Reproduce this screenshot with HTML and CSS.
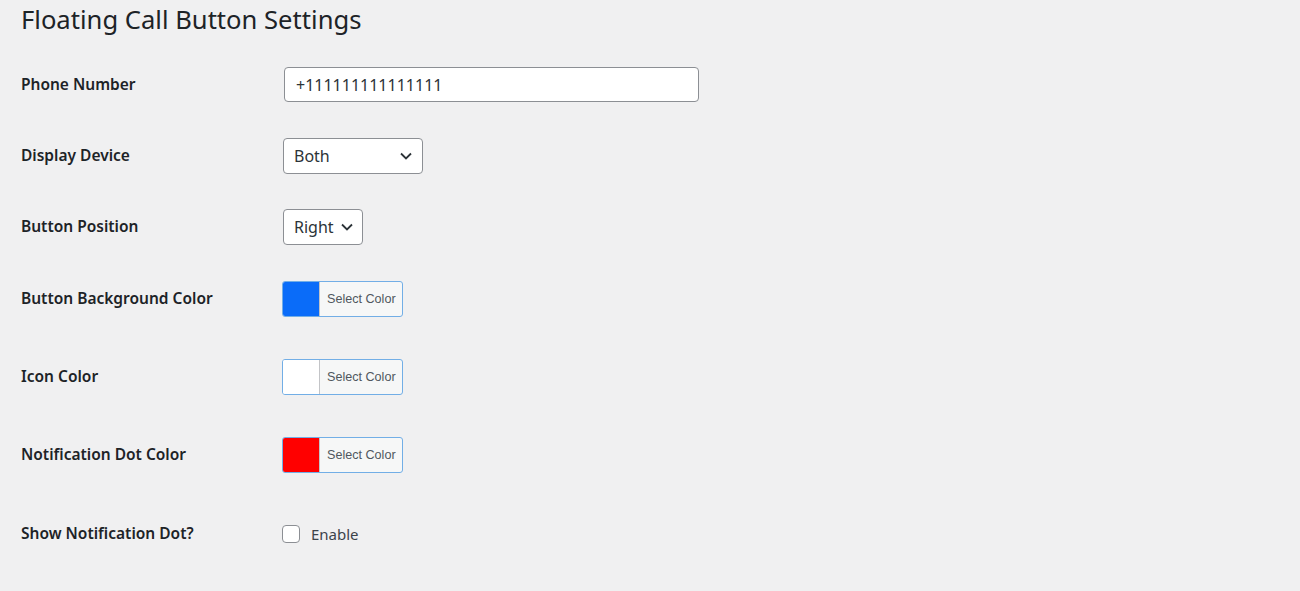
FILE: index.html
```html
<!DOCTYPE html>
<html lang="en">
<head>
  <meta charset="UTF-8">
  <title>Floating Call Button Settings</title>
  <link rel="stylesheet" href="styles.css">
</head>
<body>

<div class="wrap">
  <h1>Floating Call Button Settings</h1>

  <form class="settings-form">
    <div class="row">
      <label class="row-label" for="phone">Phone Number</label>
      <input class="text-input" type="text" id="phone" value="+111111111111111">
    </div>

    <div class="row">
      <label class="row-label" for="device">Display Device</label>
      <div class="select select-device">
        <span>Both</span>
        <svg class="chevron" viewBox="0 0 12 8" width="12" height="8"><path d="M1 1.5l5 5 5-5" fill="none" stroke="#2c3338" stroke-width="1.8"/></svg>
      </div>
    </div>

    <div class="row row-gap">
      <label class="row-label" for="position">Button Position</label>
      <div class="select select-position">
        <span>Right</span>
        <svg class="chevron" viewBox="0 0 12 8" width="12" height="8"><path d="M1 1.5l5 5 5-5" fill="none" stroke="#2c3338" stroke-width="1.8"/></svg>
      </div>
    </div>

    <div class="row row-color">
      <span class="row-label">Button Background Color</span>
      <button class="color-result" type="button">
        <span class="swatch swatch-blue"></span>
        <span class="color-text">Select Color</span>
      </button>
    </div>

    <div class="row row-color">
      <span class="row-label">Icon Color</span>
      <button class="color-result" type="button">
        <span class="swatch swatch-white"></span>
        <span class="color-text">Select Color</span>
      </button>
    </div>

    <div class="row row-color row-last">
      <span class="row-label">Notification Dot Color</span>
      <button class="color-result" type="button">
        <span class="swatch swatch-red"></span>
        <span class="color-text">Select Color</span>
      </button>
    </div>

    <div class="row">
      <span class="row-label">Show Notification Dot?</span>
      <label class="check-label"><span class="checkbox"></span>Enable</label>
    </div>
  </form>
</div>

</body>
</html>
```

FILE: styles.css
```css
body {
  margin: 0;
  background: #f0f0f1;
  color: #1d2327;
  font-family: "Noto Sans", "Open Sans", sans-serif;
}

.wrap {
  padding: 0 21px;
}

h1 {
  margin: 0;
  padding-top: 3px;
  font-size: 25.6px;
  font-weight: 400;
  line-height: 34px;
  height: 67px;
  box-sizing: border-box;
}

.row {
  display: flex;
  align-items: center;
  height: 35px;
  margin-bottom: 36px;
}

.row-gap {
  margin-bottom: 37px;
}

.row-color {
  margin-bottom: 43px;
}

.row-last {
  margin-bottom: 44px;
}

.row-label {
  width: 261px;
  flex-shrink: 0;
  margin-top: -2px;
  font-size: 15.5px;
  font-weight: 600;
}

.text-input {
  width: 415px;
  height: 35px;
  box-sizing: border-box;
  margin-left: 2px;
  padding: 0 11px;
  border: 1px solid #8c8f94;
  border-radius: 4px;
  background: #fff;
  color: #2c3338;
  font-family: inherit;
  font-size: 16px;
}

.select {
  height: 36px;
  box-sizing: border-box;
  margin-left: 1px;
  padding: 0 10px;
  border: 1px solid #8c8f94;
  border-radius: 4px;
  background: #fff;
  color: #2c3338;
  font-size: 16px;
  display: flex;
  align-items: center;
  justify-content: space-between;
}

.select-device {
  width: 140px;
}

.select-position {
  width: 80px;
  padding-right: 9px;
}

.chevron {
  margin-top: 1px;
}

.color-result {
  width: 121px;
  height: 36px;
  box-sizing: border-box;
  padding: 0;
  border: 1px solid #72aee6;
  border-radius: 3px;
  background: #f6f7f7;
  display: flex;
  align-items: stretch;
  overflow: hidden;
}

.swatch {
  width: 36px;
  flex-shrink: 0;
  border-right: 1px solid #c3c4c7;
}

.swatch-blue {
  background: #0a6cf9;
}

.swatch-white {
  background: #fff;
}

.swatch-red {
  background: #ff0000;
}

.color-text {
  flex: 1;
  display: flex;
  align-items: center;
  padding-left: 7px;
  padding-top: 1px;
  color: #50575e;
  font-family: inherit;
  font-size: 12.6px;
}

.check-label {
  display: flex;
  align-items: center;
  font-size: 15px;
  color: #3c434a;
}

.checkbox {
  width: 18px;
  height: 18px;
  box-sizing: border-box;
  margin: 1px 11px 0 0;
  border: 1px solid #8c8f94;
  border-radius: 4px;
  background: #fff;
}
```
